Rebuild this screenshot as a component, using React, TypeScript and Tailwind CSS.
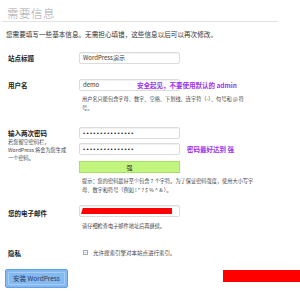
import React from "react";

const font = { fontFamily: '"Noto Sans CJK SC", "Liberation Sans", sans-serif' };

function Input({ children, className = "" }: { children?: React.ReactNode; className?: string }) {
  return (
    <div
      className={
        "w-[101px] h-[12px] border border-[#dcdcdc] rounded-[2px] bg-white shadow-[inset_0_1px_1px_rgba(0,0,0,0.06)] flex items-center pl-[3px] text-[6px] leading-[8px] text-[#333] " +
        className
      }
    >
      {children}
    </div>
  );
}

function Dots() {
  return (
    <span className="text-[6px] tracking-[1.35px] text-[#222]" style={{ fontFamily: '"Liberation Sans", sans-serif' }}>
      •••••••••••••••
    </span>
  );
}

export default function App() {
  return (
    <div className="w-[300px] h-[291px] bg-white relative overflow-hidden text-[#333]" style={font}>
      <h1 className="ml-[7px] pt-[6px] text-[11.5px] leading-[14px] text-[#a8a8a8] font-light tracking-[0.5px]">需要信息</h1>
      <div className="ml-[2px] mt-[1px] w-[276px] border-t border-[#e2e2e2]" />
      <p className="ml-[6px] mt-[8px] text-[6.6px] leading-[8px] text-[#333] whitespace-nowrap">
        您需要填写一些基本信息。无需担心填错，这些信息以后可以再次修改。
      </p>

      {/* Site title */}
      <div className="mt-[14px] flex">
        <div className="w-[79px] pl-[8px] pt-[2px] text-[6.5px] leading-[8px] font-bold text-[#222]">站点标题</div>
        <Input>WordPress演示</Input>
      </div>

      {/* Username */}
      <div className="mt-[15px] flex">
        <div className="w-[79px] pl-[8px] pt-[2px] text-[6.5px] leading-[8px] font-bold text-[#222]">用户名</div>
        <div className="flex flex-col">
          <div className="relative">
            <Input>demo</Input>
            <span className="absolute left-[58px] top-[2px] text-[6.5px] leading-[8px] font-bold text-[#9b30f0] whitespace-nowrap">
              安全起见，不要使用默认的 admin
            </span>
          </div>
          <div className="mt-[3px] pl-[3px] text-[5.2px] leading-[9px] text-[#444] whitespace-nowrap">
            用户名只能包含字母、数字、空格、下划线、连字符（-）、句号和 @ 符
            <br />号。
          </div>
        </div>
      </div>

      {/* Password */}
      <div className="mt-[15px] flex">
        <div className="w-[79px] pl-[8px] pt-[2px]">
          <div className="text-[6.5px] leading-[8px] font-bold text-[#222]">输入两次密码</div>
          <div className="mt-[1px] text-[5.2px] leading-[8px] text-[#444] whitespace-nowrap">
            若您留空密码栏，
            <br />
            WordPress 将会为您生成
            <br />
            一个密码。
          </div>
        </div>
        <div className="flex flex-col">
          <Input>
            <Dots />
          </Input>
          <div className="mt-[4px] flex items-center">
            <Input>
              <Dots />
            </Input>
            <span className="ml-[7px] text-[6.5px] leading-[8px] font-bold text-[#9b30f0] whitespace-nowrap">
              密码最好达到 强
            </span>
          </div>
          <div className="mt-[6px] w-[101px] h-[12px] bg-[#c1f57e] border border-[#a9e06a] flex items-center justify-center text-[6px] text-[#333]">
            强
          </div>
          <div className="mt-[3px] pl-[3px] text-[5.2px] leading-[9px] text-[#444] whitespace-nowrap">
            提示：您的密码最好至少包含 7 个字符。为了保证密码强度，使用大小写字
            <br />
            母、数字和符号（例如 ! " ? $ % ^ & ）。
          </div>
        </div>
      </div>

      {/* Email */}
      <div className="mt-[11px] flex">
        <div className="w-[79px] pl-[8px] pt-[4px] text-[6.5px] leading-[8px] font-bold text-[#222]">您的电子邮件</div>
        <div className="flex flex-col">
          <Input className="relative">
            <div className="absolute left-[1px] top-[2px] w-[91px] h-[6px] bg-[#ff0000] [clip-path:polygon(2%_0,100%_0,100%_100%,0_100%)]" />
          </Input>
          <div className="mt-[5px] pl-[3px] text-[5.2px] leading-[8px] text-[#444] whitespace-nowrap">
            请仔细检查电子邮件地址后再继续。
          </div>
        </div>
      </div>

      {/* Privacy */}
      <div className="mt-[18px] flex">
        <div className="w-[79px] pl-[8px] pt-[1px] text-[6.5px] leading-[8px] font-bold text-[#222]">隐私</div>
        <div className="flex items-center pl-[4px]">
          <div className="w-[5px] h-[5px] border border-[#aaa] bg-white flex items-center justify-center">
            <svg viewBox="0 0 10 10" className="w-[5px] h-[5px]">
              <path d="M2 5 L4.2 7.3 L8.2 2.5" stroke="#3a6fc1" strokeWidth="1.6" fill="none" />
            </svg>
          </div>
          <span className="ml-[5px] text-[5.5px] leading-[8px] text-[#444] whitespace-nowrap">
            允许搜索引擎对本站点进行索引。
          </span>
        </div>
      </div>

      {/* Button */}
      <div className="mt-[12px] ml-[5px] w-[63px] h-[19px] rounded-[2px] bg-[#84b9f2] border border-[#5fa0e6] p-[2px]">
        <div className="w-full h-full border border-[#a9cdf4] rounded-[1px] flex items-center justify-center text-[6.5px] text-[#2a3a55]">
          安装 WordPress
        </div>
      </div>

      <div className="absolute left-[223px] top-[270px] w-[77px] h-[12px] bg-[#ff0000]" />
    </div>
  );
}
